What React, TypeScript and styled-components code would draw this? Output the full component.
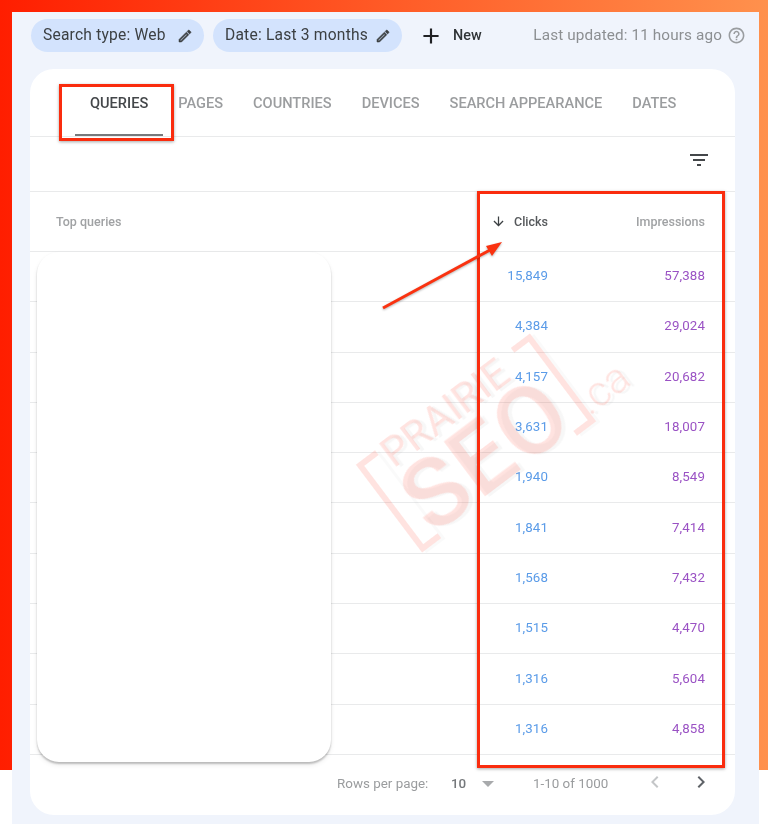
import React from "react";
import styled, { createGlobalStyle } from "styled-components";

const Global = createGlobalStyle`
  html, body { margin: 0; padding: 0; background: #fff; }
  body { font-family: Roboto, "Liberation Sans", sans-serif; width: 768px; height: 826px; overflow: hidden; }
`;

const Stage = styled.div`
  position: relative;
  width: 768px;
  height: 826px;
  box-sizing: border-box;
  padding: 12px 9px 2px 12px;
  background: linear-gradient(90deg, #ff1e00 0%, #ff5a26 50%, #ff914d 100%) no-repeat;
  background-size: 100% 770px;
`;

const Panel = styled.main`
  height: 812px;
  box-sizing: border-box;
  background: #f0f4fc;
  padding: 7px 14px 9px 18px;
  display: flex;
  flex-direction: column;
  gap: 17px;
  filter: blur(0.5px);
`;

const TopBar = styled.header`
  height: 33px;
  display: flex;
  align-items: center;
  color: #3c4043;
`;

const Chip = styled.div<{ $w: number }>`
  flex: none;
  width: ${(p) => p.$w}px;
  height: 33px;
  margin-left: 1px;
  margin-right: 8px;
  box-sizing: border-box;
  padding: 0 11px 1px 12px;
  border-radius: 17px;
  background: #d3e3fd;
  display: flex;
  align-items: center;
  justify-content: space-between;
  font-size: 15.6px;
  letter-spacing: 0.2px;
  white-space: nowrap;
  svg { width: 16px; height: 16px; fill: #3c4043; stroke: #3c4043; stroke-width: 0.8; margin-top: 1px; }
`;

const NewButton = styled.div`
  margin-left: 8px;
  display: flex;
  align-items: center;
  gap: 9px;
  font-size: 14.4px;
  font-weight: 500;
  color: #303437;
  svg { width: 26px; height: 26px; fill: #202124; }
`;

const Updated = styled.div`
  margin-left: auto;
  padding-bottom: 1px;
  display: flex;
  align-items: center;
  gap: 5px;
  font-size: 15.3px;
  letter-spacing: 0.12px;
  color: #8c8f92;
  svg { width: 19px; height: 19px; fill: #9a9da0; margin-right: -1px; }
`;

const Card = styled.section`
  flex: 1;
  background: #fff;
  border-radius: 24px;
  display: flex;
  flex-direction: column;
  width: 705px;
`;

const Tabs = styled.nav`
  height: 68px;
  box-sizing: border-box;
  padding-left: 45px;
  display: flex;
  border-bottom: 1px solid #e9eaeb;
`;

const Tab = styled.div<{ $active?: boolean }>`
  height: 67px;
  box-sizing: border-box;
  padding: 25px 15px 0;
  font-size: 14.6px;
  font-weight: 500;
  color: ${(p) => (p.$active ? "#44474a" : "#9b9d9f")};
  border-bottom: 2px solid ${(p) => (p.$active ? "#77797c" : "transparent")};
`;

const FilterBar = styled.div`
  height: 55px;
  box-sizing: border-box;
  padding-right: 24px;
  display: flex;
  align-items: center;
  justify-content: flex-end;
  border-bottom: 1px solid #e9eaeb;
  svg { width: 24px; height: 24px; fill: #44474a; margin-bottom: 9px; }
`;

const Row = styled.div<{ $h: number }>`
  height: ${(p) => p.$h}px;
  box-sizing: border-box;
  padding: 0 30px 0 26px;
  display: grid;
  grid-template-columns: 1fr 130px 157px;
  align-items: center;
  border-bottom: 1px solid #e9eaeb;
`;

const HeadLabel = styled.div<{ $strong?: boolean; $right?: boolean }>`
  display: flex;
  align-items: center;
  justify-content: ${(p) => (p.$right ? "flex-end" : "flex-start")};
  gap: 8px;
  font-size: 12.5px;
  font-weight: 500;
  color: ${(p) => (p.$strong ? "#55585b" : "#a0a2a4")};
  svg { width: 15px; height: 15px; fill: #3c4043; }
`;

const Value = styled.div<{ $kind: "clicks" | "impressions" }>`
  text-align: right;
  font-size: 13.3px;
  letter-spacing: 0.12px;
  margin-bottom: 2px;
  color: ${(p) => (p.$kind === "clicks" ? "#5a9be8" : "#9a52c4")};
`;

const Pager = styled.footer`
  flex: 1;
  display: flex;
  align-items: center;
  padding: 0 0 2px 307px;
  font-size: 13.4px;
  color: #9a9c9e;
  white-space: nowrap;
`;

const PerPage = styled.span`
  flex: none;
  width: 114px;
`;

const PageSize = styled.span`
  flex: none;
  font-weight: 500;
  color: #75787b;
  width: 31px;
`;

const Caret = styled.span`
  flex: none;
  width: 0;
  height: 0;
  border-left: 6px solid transparent;
  border-right: 6px solid transparent;
  border-top: 6px solid #a8aaac;
  margin-right: 39px;
`;

const Range = styled.span`
  flex: none;
  width: 110px;
`;

const Nav = styled.span<{ $on?: boolean; $w: number }>`
  flex: none;
  width: ${(p) => p.$w}px;
  display: flex;
  justify-content: center;
  margin-top: -4px;
  svg { width: 24px; height: 24px; fill: ${(p) => (p.$on ? "#5f6368" : "#c4c6c8")}; }
`;

const Cover = styled.div`
  position: absolute;
  left: 37px;
  top: 252px;
  width: 294px;
  height: 510px;
  background: #fff;
  border-radius: 22px;
  box-shadow: 0 2px 2px rgba(0,0,0,.22), 0 3px 5px rgba(0,0,0,.08), 0 0 3px rgba(0,0,0,.03);
  filter: blur(0.4px);
`;

const RedBox = styled.div<{ $x: number; $y: number; $w: number; $h: number }>`
  position: absolute;
  left: ${(p) => p.$x}px;
  top: ${(p) => p.$y}px;
  width: ${(p) => p.$w}px;
  height: ${(p) => p.$h}px;
  box-sizing: border-box;
  border: 3px solid #fa2c0e;
  box-shadow: 0 1px 3px rgba(0,0,0,.35);
  filter: blur(0.3px);
`;

const ArrowArt = styled.svg`
  position: absolute;
  left: 370px;
  top: 230px;
  width: 145px;
  height: 90px;
  filter: drop-shadow(0 1px 1px rgba(0,0,0,.3));
`;

const Watermark = styled.div`
  position: absolute;
  left: 367px;
  top: 388px;
  width: 218px;
  height: 110px;
  transform: rotate(-37deg);
  color: rgba(255, 70, 45, 0.15);
  font-family: Roboto, sans-serif;
  text-shadow: 3px 3px 0 rgba(0,0,0,.03);
  filter: blur(0.4px);
`;

const Bracket = styled.div<{ $side: "left" | "right" }>`
  position: absolute;
  top: 0;
  bottom: 0;
  ${(p) => p.$side}: 0;
  width: 24px;
  box-sizing: border-box;
  border: 6px solid rgba(255, 70, 45, 0.15);
  border-${(p) => (p.$side === "left" ? "right" : "left")}: 0;
  box-shadow: 3px 3px 0 rgba(0,0,0,.02);
`;

const Prairie = styled.div`
  position: absolute;
  left: 28px;
  top: -11px;
  font-size: 41px;
  line-height: 46px;
  font-weight: 400;
`;

const Seo = styled.div`
  position: absolute;
  left: 18px;
  top: 22px;
  font-size: 96px;
  line-height: 96px;
  font-weight: 500;
  letter-spacing: 1px;
`;

const Dot = styled.div`
  position: absolute;
  left: 216px;
  top: 66px;
  font-size: 42px;
  line-height: 44px;
  font-weight: 300;
`;

const I = ({ d }: { d: string }) => (
  <svg viewBox="0 0 24 24" aria-hidden="true"><path d={d} /></svg>
);

const EDIT = "M14.06 9.02l.92.92L5.92 19H5v-.92l9.06-9.06M17.66 3c-.25 0-.51.1-.7.29l-1.83 1.83 3.75 3.75 1.83-1.83c.39-.39.39-1.02 0-1.41l-2.34-2.34c-.2-.2-.45-.29-.71-.29zm-3.6 3.19L3 17.25V21h3.75L17.81 9.94l-3.75-3.75z";
const PLUS = "M19 13h-6v6h-2v-6H5v-2h6V5h2v6h6v2z";
const HELP = "M11 18h2v-2h-2v2zm1-16C6.48 2 2 6.48 2 12s4.48 10 10 10 10-4.48 10-10S17.52 2 12 2zm0 18c-4.41 0-8-3.59-8-8s3.59-8 8-8 8 3.59 8 8-3.59 8-8 8zm0-14c-2.21 0-4 1.79-4 4h2c0-1.1.9-2 2-2s2 .9 2 2c0 2-3 1.75-3 5h2c0-2.25 3-2.5 3-5 0-2.21-1.79-4-4-4z";
const FILTER = "M10 18h4v-2h-4v2zM3 6v2h18V6H3zm3 7h12v-2H6v2z";
const DOWN = "M20 12l-1.41-1.41L13 16.17V4h-2v12.17l-5.58-5.59L4 12l8 8 8-8z";
const PREV = "M15.41 7.41L14 6l-6 6 6 6 1.41-1.41L10.83 12z";
const NEXT = "M10 6L8.59 7.41 13.17 12l-4.58 4.59L10 18l6-6z";

const TABS = ["QUERIES", "PAGES", "COUNTRIES", "DEVICES", "SEARCH APPEARANCE", "DATES"];
const DATA: [string, string][] = [
  ["15,849", "57,388"],
  ["4,384", "29,024"],
  ["4,157", "20,682"],
  ["3,631", "18,007"],
  ["1,940", "8,549"],
  ["1,841", "7,414"],
  ["1,568", "7,432"],
  ["1,515", "4,470"],
  ["1,316", "5,604"],
  ["1,316", "4,858"],
];

export default function App() {
  return (
    <Stage>
      <Global />
      <Panel>
        <TopBar>
          <Chip $w={173}>Search type: Web<I d={EDIT} /></Chip>
          <Chip $w={189}>Date: Last 3 months<I d={EDIT} /></Chip>
          <NewButton><I d={PLUS} />New</NewButton>
          <Updated>Last updated: 11 hours ago<I d={HELP} /></Updated>
        </TopBar>
        <Card>
          <Tabs>
            {TABS.map((t, i) => <Tab key={t} $active={i === 0}>{t}</Tab>)}
          </Tabs>
          <FilterBar><I d={FILTER} /></FilterBar>
          <Row $h={60}>
            <HeadLabel>Top queries</HeadLabel>
            <HeadLabel $strong $right><I d={DOWN} />Clicks</HeadLabel>
            <HeadLabel $right>Impressions</HeadLabel>
          </Row>
          {DATA.map(([c, v], i) => (
            <Row key={i} $h={50.3}>
              <span />
              <Value $kind="clicks">{c}</Value>
              <Value $kind="impressions">{v}</Value>
            </Row>
          ))}
          <Pager>
            <PerPage>Rows per page:</PerPage>
            <PageSize>10</PageSize>
            <Caret />
            <Range>1-10 of 1000</Range>
            <Nav $w={24}><I d={PREV} /></Nav>
            <Nav $on $w={68}><I d={NEXT} /></Nav>
          </Pager>
        </Card>
      </Panel>
      <Watermark aria-hidden="true">
        <Bracket $side="left" />
        <Bracket $side="right" />
        <Prairie>PRAIRIE</Prairie>
        <Seo>SEO</Seo>
        <Dot>.ca</Dot>
      </Watermark>
      <Cover />
      <RedBox $x={59} $y={84} $w={115} $h={57} />
      <RedBox $x={477} $y={191} $w={248} $h={577} />
      <ArrowArt viewBox="0 0 145 90">
        <path d="M13 78 L120 20" stroke="#fa3210" strokeWidth="3" fill="none" />
        <path d="M132 12 L116 16 L122 26 Z" fill="#fa3210" />
      </ArrowArt>
    </Stage>
  );
}
